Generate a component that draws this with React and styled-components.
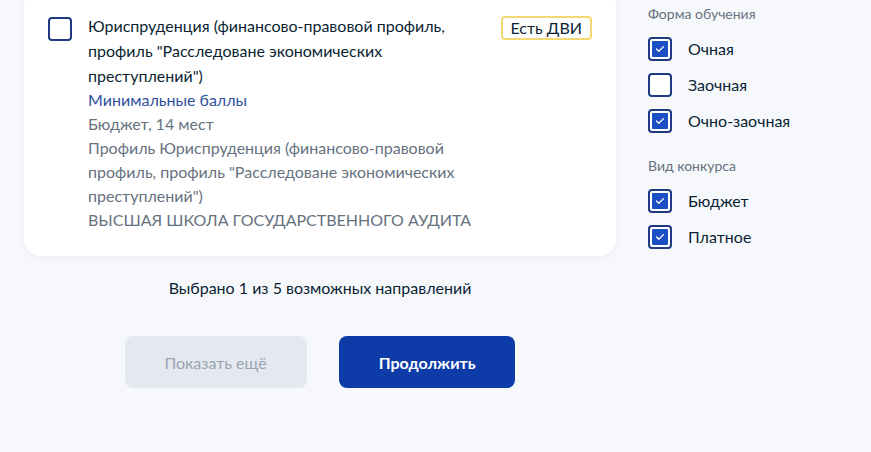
import styled, {createGlobalStyle} from 'styled-components';

const GlobalStyle = createGlobalStyle`
  html, body {
    margin: 0;
    padding: 0;
    background: #f6f8fc;
    font-family: Lato, "Noto Sans", sans-serif;
    color: #0b1f33;
    overflow: hidden;
  }
`

const Page = styled.div`
  display: flex;
  gap: 32px;
  width: 871px;
  height: 452px;
  padding-left: 24px;
  box-sizing: border-box;
`

const Main = styled.div`
  width: 592px;
  display: flex;
  flex-direction: column;
  align-items: center;
`

const Card = styled.div`
  align-self: stretch;
  margin-top: -11px;
  background: #fff;
  border-radius: 16px;
  box-shadow: 0 1px 6px rgba(11, 31, 51, 0.06);
  padding: 24px;
  display: flex;
  gap: 16px;
  align-items: flex-start;
`

const Box = styled.span`
  flex: none;
  box-sizing: border-box;
  width: 24px;
  height: 24px;
  border: 2px solid #1f3a80;
  border-radius: 4px;
  background: #fff;
  padding: 2px;
  display: flex;
  margin-top: ${p => p.$offset || 0}px;
`

const BoxFill = styled.span`
  flex: 1;
  background: #1d4fc4;
  border-radius: 1px;
  display: flex;
  align-items: center;
  justify-content: center;
`

const Info = styled.div`
  flex: 1;
  font-size: 16px;
  line-height: 24px;
  padding-right: 12px;
`

const Title = styled.div`
  line-height: 25px;
  color: #0b1f33;
`

const Line = styled.div`
  color: ${p => p.$tone === 'link' ? '#2f4f9f' : '#66727f'};
`

const Badge = styled.span`
  flex: none;
  margin-top: 3px;
  border: 2px solid #f3d874;
  border-radius: 4px;
  padding: 0 8px;
  font-size: 16px;
  line-height: 20px;
  color: #0b1f33;
`

const Counter = styled.div`
  margin-top: 20px;
  font-size: 16px;
  line-height: 24px;
  color: #0b1f33;
`

const Actions = styled.div`
  margin-top: 36px;
  display: flex;
  gap: 32px;
`

const Button = styled.button`
  height: 52px;
  padding: 0 40px;
  border: none;
  border-radius: 8px;
  font-family: Lato, "Noto Sans", sans-serif;
  font-size: 16px;
  background: ${p => p.$primary ? '#0d3ca9' : '#e4e9f1'};
  color: ${p => p.$primary ? '#fff' : '#9aa4b0'};
  font-weight: ${p => p.$primary ? 700 : 400};
`

const Sidebar = styled.div`
  padding-top: 4px;
  display: flex;
  flex-direction: column;
`

const GroupTitle = styled.div`
  font-size: 14px;
  line-height: 20px;
  color: #66727f;
  margin-bottom: 13px;
`

const Group = styled.div`
  display: flex;
  flex-direction: column;
  gap: 12px;
  margin-bottom: 23px;
`

const Row = styled.label`
  display: flex;
  align-items: center;
  gap: 16px;
  font-size: 16px;
  line-height: 24px;
  color: #0b1f33;
`

function Check({checked, offset}) {
  return (
    <Box $offset={offset}>
      {checked && (
        <BoxFill>
          <svg width="10" height="8" viewBox="0 0 10 8" fill="none">
            <path d="M1.5 4l2.3 2.3L8.5 1.6" stroke="#fff" strokeWidth="1.3" strokeLinecap="round" strokeLinejoin="round"/>
          </svg>
        </BoxFill>
      )}
    </Box>
  )
}

const filters = [
  {title: 'Форма обучения', items: [['Очная', true], ['Заочная', false], ['Очно-заочная', true]]},
  {title: 'Вид конкурса', items: [['Бюджет', true], ['Платное', true]]},
]

export default function App() {
  return (
    <>
      <GlobalStyle/>
      <Page>
        <Main>
          <Card>
            <Check offset={4}/>
            <Info>
              <Title>Юриспруденция (финансово-правовой профиль, профиль "Расследоване экономических преступлений")</Title>
              <Line $tone="link">Минимальные баллы</Line>
              <Line>Бюджет, 14 мест</Line>
              <Line>Профиль Юриспруденция (финансово-правовой профиль, профиль "Расследоване экономических преступлений")</Line>
              <Line>ВЫСШАЯ ШКОЛА ГОСУДАРСТВЕННОГО АУДИТА</Line>
            </Info>
            <Badge>Есть ДВИ</Badge>
          </Card>
          <Counter>Выбрано 1 из 5 возможных направлений</Counter>
          <Actions>
            <Button>Показать ещё</Button>
            <Button $primary>Продолжить</Button>
          </Actions>
        </Main>
        <Sidebar>
          {filters.map(group => (
            <div key={group.title}>
              <GroupTitle>{group.title}</GroupTitle>
              <Group>
                {group.items.map(([label, checked]) => (
                  <Row key={label}>
                    <Check checked={checked}/>
                    {label}
                  </Row>
                ))}
              </Group>
            </div>
          ))}
        </Sidebar>
      </Page>
    </>
  )
}
